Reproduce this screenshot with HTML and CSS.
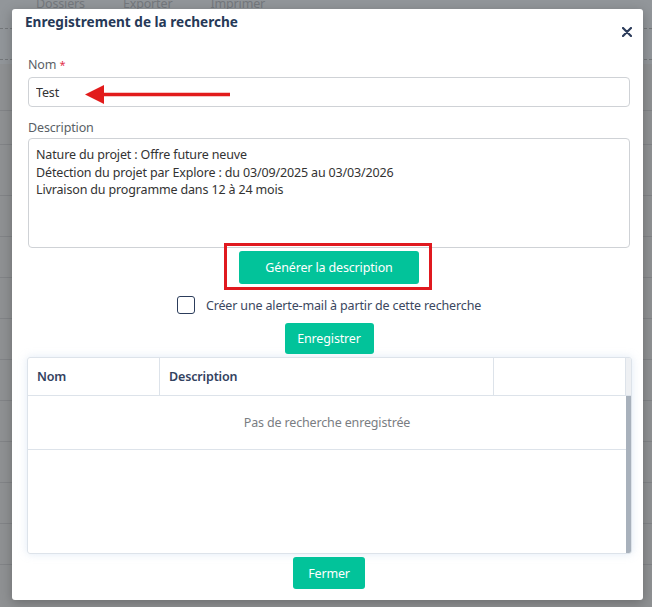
FILE: index.html
```html
<!DOCTYPE html>
<html lang="fr">
<head>
    <meta charset="UTF-8">
    <meta name="viewport" content="width=device-width, initial-scale=1.0">
    <title>Enregistrement de la recherche</title>
    <link rel="stylesheet" href="styles.css">
</head>
<body>
    <div class="page">
        <div class="page-top">
            <nav class="tabs">
                <span>Dossiers</span>
                <span>Exporter</span>
                <span>Imprimer</span>
            </nav>
            <div class="dash dash-1"></div>
            <div class="dash dash-2"></div>
        </div>
        <div class="rows">
            <div class="row row-first"></div>
            <div class="row row-short"></div>
            <div class="row row-tall"></div>
            <div class="row"></div>
            <div class="row"></div>
            <div class="row"></div>
            <div class="row"></div>
            <div class="row"></div>
            <div class="row"></div>
            <div class="row"></div>
            <div class="row"></div>
            <div class="row"></div>
        </div>
    </div>

    <div class="modal">
        <div class="modal-header">
            <h2 class="modal-title">Enregistrement de la recherche</h2>
            <button class="close" aria-label="Fermer">
                <svg width="10" height="10" viewBox="0 0 10 10">
                    <path d="M1 1 L9 9 M9 1 L1 9" stroke="#2b3b5a" stroke-width="2.2" stroke-linecap="round"/>
                </svg>
            </button>
        </div>

        <div class="modal-body">
            <label class="field-label">Nom <span class="required">*</span></label>
            <div class="input-wrap">
                <input class="input" type="text" value="Test">
                <!-- annotation arrow -->
                <svg class="arrow" width="146" height="20" viewBox="0 0 146 20">
                    <polygon points="0,9.5 19,0 19,19" fill="#e21b1b"/>
                    <line x1="17" y1="9.5" x2="145" y2="9.5" stroke="#e21b1b" stroke-width="3.5"/>
                </svg>
            </div>

            <label class="field-label label-desc">Description</label>
            <textarea class="textarea">Nature du projet : Offre future neuve
Détection du projet par Explore : du 03/09/2025 au 03/03/2026
Livraison du programme dans 12 à 24 mois</textarea>

            <div class="actions">
                <div class="highlight">
                    <button class="btn btn-generate">Générer la description</button>
                </div>
            </div>

            <div class="check-row">
                <span class="checkbox"></span>
                <span class="check-label">Créer une alerte-mail à partir de cette recherche</span>
            </div>

            <div class="actions">
                <button class="btn btn-save">Enregistrer</button>
            </div>

            <div class="grid">
                <div class="grid-head">
                    <div class="cell">Nom</div>
                    <div class="cell">Description</div>
                    <div class="cell"></div>
                    <div class="corner"></div>
                </div>
                <div class="grid-body">
                    <div class="grid-rows">
                        <div class="empty-row">Pas de recherche enregistrée</div>
                    </div>
                    <div class="scrollbar"></div>
                </div>
            </div>

            <div class="actions">
                <button class="btn btn-close">Fermer</button>
            </div>
        </div>
    </div>
</body>
</html>
```

FILE: styles.css
```css
body {
    margin: 0;
    padding: 0;
    height: 100vh;
    overflow: hidden;
    background: #8f9193;
    font-family: 'Noto Sans', 'Liberation Sans', sans-serif;
    font-size: 12.5px;
    letter-spacing: -0.15px;
    position: relative;
}

/* page behind the overlay */
.page {
    width: 100%;
}

.page-top {
    height: 68px;
    background: #92969a;
    position: relative;
}

.tabs {
    display: flex;
    gap: 38px;
    padding-left: 36px;
    margin-top: -4px;
    line-height: 16px;
    color: #74787d;
    font-size: 12.5px;
}

.dash {
    border-top: 1px dashed #74777a;
}

.dash-1 {
    margin-top: 16px;
}

.dash-2 {
    margin-top: 30px;
}

.row {
    height: 40px;
    border-bottom: 1px solid #828487;
}

.row-first {
    height: 46px;
}

.row-short {
    height: 33px;
}

.row-tall {
    height: 50px;
}

/* modal */
.modal {
    position: absolute;
    left: 12px;
    top: 9px;
    width: 631px;
    height: 591px;
    box-sizing: border-box;
    background: #fff;
    border-radius: 3px;
    box-shadow: 0 3px 12px rgba(0, 0, 0, 0.25);
}

.modal-header {
    display: flex;
    justify-content: space-between;
    align-items: flex-start;
    height: 47px;
    padding: 3px 11px 0 13px;
    box-sizing: border-box;
}

.modal-title {
    margin: 0;
    font-size: 13.6px;
    font-weight: 700;
    line-height: 20px;
    letter-spacing: 0;
    color: #263957;
}

.close {
    border: 0;
    background: none;
    padding: 0;
    margin-top: 15px;
    width: 10px;
    height: 10px;
    cursor: pointer;
}

.close svg {
    display: block;
}

.modal-body {
    padding: 0 13px 0 16px;
}

.field-label {
    display: block;
    line-height: 18px;
    color: #5a5f66;
    margin-bottom: 3px;
}

.required {
    color: #e2334b;
    font-size: 11px;
    vertical-align: top;
}

.label-desc {
    margin-top: 12px;
    margin-bottom: 1px;
}

.input-wrap {
    position: relative;
}

.input,
.textarea {
    display: block;
    width: 100%;
    box-sizing: border-box;
    border: 1px solid #cfd2d6;
    border-radius: 4px;
    font-family: inherit;
    font-size: 12.5px;
    letter-spacing: -0.15px;
    color: #333;
    padding: 0 7px;
    outline: none;
}

.input {
    height: 30px;
}

.textarea {
    height: 110px;
    padding: 7px 7px;
    line-height: 17.5px;
    resize: none;
}

.arrow {
    position: absolute;
    left: 57px;
    top: 8px;
}

.actions {
    display: flex;
    justify-content: center;
}

.btn {
    border: 0;
    border-radius: 3px;
    background: #02c39a;
    color: #fff;
    font-family: inherit;
    font-size: 12.5px;
    letter-spacing: -0.15px;
    cursor: pointer;
}

.highlight {
    position: relative;
    margin-top: 3px;
}

/* red annotation frame */
.highlight::after {
    content: '';
    position: absolute;
    top: -8px;
    bottom: -6px;
    left: -15px;
    right: -13px;
    border: 3px solid #e0191f;
    pointer-events: none;
}

.btn-generate {
    display: block;
    height: 33px;
    width: 180px;
}

.check-row {
    display: flex;
    justify-content: center;
    align-items: center;
    gap: 11px;
    margin-top: 12px;
    height: 18px;
}

.checkbox {
    width: 16px;
    height: 16px;
    border: 1.5px solid #2c3d5b;
    border-radius: 3px;
}

.check-label {
    color: #3b4760;
}

.btn-save {
    margin-top: 9px;
    height: 31px;
    width: 89px;
}

.grid {
    margin: 3px -2px 0 -1px;
    height: 197px;
    box-sizing: border-box;
    border: 1px solid #dde3ea;
    border-radius: 3px;
    box-shadow: 0 0 8px rgba(170, 195, 225, 0.35);
    display: flex;
    flex-direction: column;
    overflow: hidden;
}

.grid-head {
    display: grid;
    grid-template-columns: 132px 334px 1fr 5px;
    height: 38px;
    box-sizing: border-box;
    border-bottom: 1px solid #dde3ea;
    flex-shrink: 0;
}

.cell {
    display: flex;
    align-items: center;
    padding-left: 9px;
    border-right: 1px solid #dde3ea;
    color: #33425f;
    font-weight: 600;
}

.corner {
    background: #eef0f3;
}

.grid-body {
    flex: 1;
    display: flex;
}

.grid-rows {
    flex: 1;
}

.empty-row {
    height: 54px;
    box-sizing: border-box;
    border-bottom: 1px solid #dde3ea;
    display: flex;
    align-items: center;
    justify-content: center;
    color: #7a7d82;
}

.scrollbar {
    width: 5px;
    background: #a8b1bc;
}

.btn-close {
    margin-top: 3px;
    height: 32px;
    width: 72px;
}
```
